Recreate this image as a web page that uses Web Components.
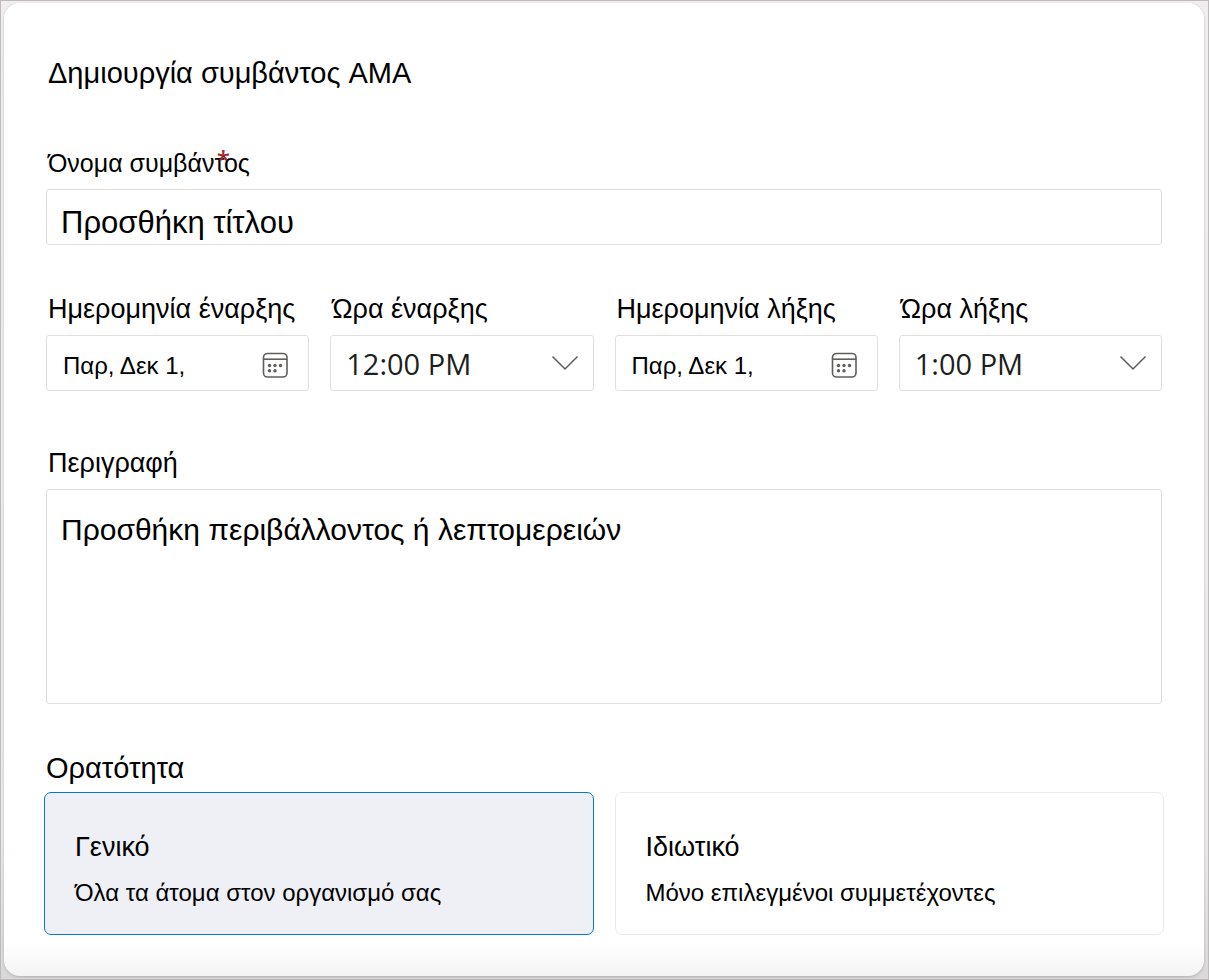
<!DOCTYPE html>
<html lang="el">
<head>
<meta charset="utf-8">
<meta name="viewport" content="width=device-width, initial-scale=1">
<title>Δημιουργία συμβάντος AMA</title>
<style>
  html { height: 100%; }
  body {
    box-sizing: border-box;
    min-height: 100%;
    margin: 0;
    display: flex;
    font-family: "Liberation Sans", Arial, sans-serif;
    color: #000;
    border: 1px solid #c0babc;
    padding: 2px 4px 3px 3px;
    background: linear-gradient(#f1eef0, #eceaec 85%, #d9d9d9);
  }
  ama-form { flex: 1; min-width: 0; }
</style>
</head>
<body>
<ama-form>
  <h1 slot="title">Δημιουργία συμβάντος AMA</h1>
  <form-field label="Όνομα συμβάντος" kind="text" hint="Προσθήκη τίτλου" required></form-field>
  <field-row>
    <form-field label="Ημερομηνία έναρξης" kind="date" value="Παρ, Δεκ 1,"></form-field>
    <form-field label="Ώρα έναρξης" kind="time" value="12:00 PM"></form-field>
    <form-field label="Ημερομηνία λήξης" kind="date" value="Παρ, Δεκ 1,"></form-field>
    <form-field label="Ώρα λήξης" kind="time" value="1:00 PM"></form-field>
  </field-row>
  <form-field label="Περιγραφή" kind="area" hint="Προσθήκη περιβάλλοντος ή λεπτομερειών"></form-field>
  <visibility-picker slot="footer" legend="Ορατότητα"></visibility-picker>
</ama-form>

<script>
class AmaForm extends HTMLElement {
  constructor() {
    super();
    this.attachShadow({ mode: "open" }).innerHTML = `
      <style>
        :host { display: block; box-sizing: border-box; padding: 52px 40px 41px;
          border-radius: 16px;
          background: linear-gradient(to top, #f4f4f4, #fff 32px);
          box-shadow: 0 1px 3px rgba(0,0,0,.2); }
        form { display: flex; flex-direction: column; }
        ::slotted(h1) { margin: 0 4px 56px; font-size: 29px; line-height: 36px; font-weight: 400; }
        .fields { display: flex; flex-direction: column; padding: 0 2px; margin-bottom: 48px; }
        ::slotted(field-row) { margin: 48px 0 56px; }
      </style>
      <form>
        <slot name="title"></slot>
        <div class="fields"><slot></slot></div>
        <slot name="footer"></slot>
      </form>`;
  }
}

class FieldRow extends HTMLElement {
  constructor() {
    super();
    this.attachShadow({ mode: "open" }).innerHTML = `
      <style>
        :host { display: grid; grid-template-columns: repeat(4, minmax(0, 1fr)); gap: 21px; }
        @media (max-width: 1000px) { :host { grid-template-columns: repeat(2, minmax(0, 1fr)); } }
      </style><slot></slot>`;
  }
}

const calendarIcon = `
  <svg viewBox="0 0 26 26" width="26" height="26" fill="none" stroke="#605e5c" stroke-width="1.6" aria-hidden="true">
    <rect x="1.500" y="1.500" width="23.500" height="23.500" rx="4"/>
    <path d="M1.500 7.200H25"/>
    <g fill="#605e5c" stroke="none">
      <circle cx="7.500" cy="13.500" r="1.700"/><circle cx="13" cy="13.500" r="1.700"/><circle cx="18.500" cy="13.500" r="1.700"/>
      <circle cx="7.500" cy="18.700" r="1.700"/><circle cx="13" cy="18.700" r="1.700"/>
    </g>
  </svg>`;

class FormField extends HTMLElement {
  connectedCallback() {
    const kind = this.getAttribute("kind");
    const value = this.getAttribute("value") || "";
    const hint = this.getAttribute("hint") || "";
    const required = this.hasAttribute("required");
    const controls = {
      text: `<input id="c" type="text" placeholder="${hint}" ${required ? "required" : ""}>`,
      area: `<textarea id="c" placeholder="${hint}"></textarea>`,
      date: `<input id="c" type="text" value="${value}"><button type="button" aria-label="Ημερολόγιο">${calendarIcon}</button>`,
      time: `<select id="c"><option>${value}</option></select>
        <svg class="chevron" viewBox="0 0 28 16" width="28" height="16" fill="none" stroke="#605e5c" stroke-width="1.5" aria-hidden="true"><path d="M1.500 1.500L14 14L26.500 1.500"/></svg>`
    };
    this.attachShadow({ mode: "open" }).innerHTML = `
      <style>
        :host { display: block; min-width: 0; }
        label { position: relative; display: block; width: max-content; margin: 0 0 10px 2px;
          font-size: 27px; line-height: 32px; white-space: nowrap; }
        label.small { font-size: 25px; }
        .star { position: absolute; right: 20px; top: -4px; color: #a4262c;
          font: 600 24px/32px "Open Sans", sans-serif; }
        .box { display: flex; align-items: center; box-sizing: border-box; height: 56px;
          border: 1px solid #e1dfdd; border-radius: 3px; background: #fff; }
        .box.area { height: 215px; }
        input, textarea, select { flex: 1; min-width: 0; box-sizing: border-box; height: 100%;
          margin: 0; border: 0; outline: 0; background: none; color: #000; font-family: inherit; }
        ::placeholder { color: #000; opacity: 1; }
        .text input { font-size: 31px; padding: 12px 14px 0; }
        textarea { font-size: 30px; line-height: 36px; padding: 22px 14px; resize: none; }
        .date input { font-size: 24px; padding: 6px 0 0 16px; }
        select { appearance: none; padding: 0 0 0 15px; color: #201f1e;
          font-family: "Open Sans", sans-serif; font-size: 29px; }
        button { display: flex; border: 0; padding: 0; margin: 4px 20px 0 0; background: none; }
        .chevron { margin-left: -28px; position: relative; right: 14px; pointer-events: none; }
      </style>
      <label for="c" class="${required ? "small" : ""}">${this.getAttribute("label")}${required ? '<span class="star">*</span>' : ""}</label>
      <div class="box ${kind}">${controls[kind]}</div>`;
  }
}

class OptionCard extends HTMLElement {
  constructor() {
    super();
    this.attachShadow({ mode: "open" }).innerHTML = `
      <style>
        :host { display: block; box-sizing: border-box; height: 143px; padding: 38px 30px 0;
          border: 1px solid #edebe9; border-radius: 7px; background: #fff; }
        :host([selected]) { background: #eff0f6; border-color: #0078d4; }
        ::slotted(strong) { display: block; font-weight: 400; font-size: 27px; line-height: 32px; }
        ::slotted(span) { display: block; margin-top: 14px; font-size: 24px; line-height: 32px; }
      </style><slot></slot>`;
  }
}

class VisibilityPicker extends HTMLElement {
  connectedCallback() {
    this.attachShadow({ mode: "open" }).innerHTML = `
      <style>
        :host { display: block; }
        fieldset { border: 0; margin: 0; padding: 0; min-width: 0; }
        legend { padding: 0 2px; margin-bottom: 8px; font-size: 29px; line-height: 32px; }
        .options { display: grid; grid-template-columns: repeat(2, minmax(0, 1fr)); gap: 21px; }
        label { position: relative; display: block; }
        input { position: absolute; inset: 0; margin: 0; width: 100%; height: 100%; opacity: 0; }
      </style>
      <fieldset>
        <legend>${this.getAttribute("legend")}</legend>
        <div class="options">
          <label><input type="radio" name="v" checked><option-card selected>
            <strong>Γενικό</strong><span>Όλα τα άτομα στον οργανισμό σας</span></option-card></label>
          <label><input type="radio" name="v"><option-card>
            <strong>Ιδιωτικό</strong><span>Μόνο επιλεγμένοι συμμετέχοντες</span></option-card></label>
        </div>
      </fieldset>`;
    this.shadowRoot.addEventListener("change", () => {
      for (const input of this.shadowRoot.querySelectorAll("input"))
        input.nextElementSibling.toggleAttribute("selected", input.checked);
    });
  }
}

customElements.define("ama-form", AmaForm);
customElements.define("field-row", FieldRow);
customElements.define("form-field", FormField);
customElements.define("option-card", OptionCard);
customElements.define("visibility-picker", VisibilityPicker);
</script>
</body>
</html>
